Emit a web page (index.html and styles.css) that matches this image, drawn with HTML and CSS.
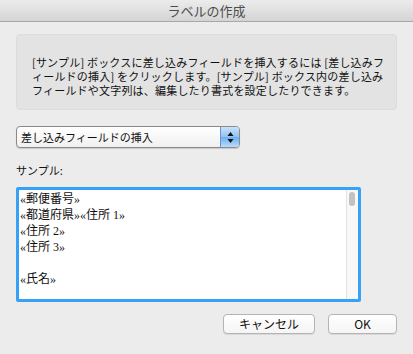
FILE: index.html
```html
<!DOCTYPE html>
<html lang="ja">
<head>
    <meta charset="UTF-8">
    <title>ラベルの作成</title>
    <link rel="stylesheet" href="styles.css">
</head>
<body>
    <div class="window">
        <div class="titlebar">ラベルの作成</div>

        <div class="content">
            <div class="info">
                <p>[サンプル] ボックスに差し込みフィールドを挿入するには [差し込みフ<br>ィールドの挿入] をクリックします。[サンプル] ボックス内の差し込み<br>フィールドや文字列は、編集したり書式を設定したりできます。</p>
            </div>

            <div class="popup">
                <span class="popup-label">差し込みフィールドの挿入</span>
                <span class="stepper">
                    <svg width="7" height="13" viewBox="0 0 7 13">
                        <path d="M3.5 1 L6.5 5 L0.5 5 Z" fill="#111"/>
                        <path d="M3.5 12 L6.5 8 L0.5 8 Z" fill="#111"/>
                    </svg>
                </span>
            </div>

            <div class="sample-label">サンプル:</div>

            <div class="sample-box">
                <div class="sample-text">
                    <div class="line">«郵便番号»</div>
                    <div class="line">«都道府県»«住所 1»</div>
                    <div class="line">«住所 2»</div>
                    <div class="line">«住所 3»</div>
                    <div class="line"></div>
                    <div class="line">«氏名»</div>
                </div>
                <div class="scrollbar">
                    <div class="thumb"></div>
                </div>
            </div>

            <div class="buttons">
                <button class="btn btn-cancel">キャンセル</button>
                <button class="btn btn-ok">OK</button>
            </div>
        </div>
    </div>
</body>
</html>
```

FILE: styles.css
```css
* {
    margin: 0;
    padding: 0;
    box-sizing: border-box;
}

body {
    width: 413px;
    height: 354px;
    overflow: hidden;
    background-color: #ececec;
    font-family: "Noto Sans CJK JP", "Liberation Sans", sans-serif;
    color: #111;
}

.window {
    height: 354px;
    background-color: #ececec;
}

.titlebar {
    height: 22px;
    line-height: 21px;
    text-align: center;
    font-size: 13px;
    color: #4d4d4d;
    background: linear-gradient(#ececec, #d4d4d4);
    border-bottom: 1px solid #a8a8a8;
}

.content {
    padding: 12px 16px 0 16px;
}

.info {
    height: 76px;
    background-color: #e3e3e3;
    border: 1px solid #dcdcdc;
    border-radius: 4px;
    padding: 20px 4px 0 15px;
}

.info p {
    font-size: 11px;
    line-height: 14px;
    letter-spacing: 0.2px;
    white-space: nowrap;
    color: #111;
}

.popup {
    display: flex;
    width: 224px;
    height: 22px;
    margin-top: 16px;
    border: 1px solid #8a8a8a;
    border-radius: 4px;
    background: linear-gradient(#ffffff, #f0f0f0);
    box-shadow: 0 1px 1px rgba(0, 0, 0, 0.15);
    overflow: hidden;
}

.popup-label {
    flex: 1;
    font-size: 11px;
    line-height: 20px;
    padding-left: 4px;
}

.stepper {
    width: 19px;
    display: flex;
    align-items: center;
    justify-content: center;
    background: linear-gradient(#c9e2fb, #8fc2f5 50%, #6aaef3 51%, #b8dcfd);
    border-left: 1px solid #6d94c6;
}

.sample-label {
    font-size: 11px;
    line-height: 14px;
    margin-top: 15px;
}

.sample-box {
    display: flex;
    width: 345px;
    height: 115px;
    margin-top: 10px;
    border: 3px solid #37a1f8;
    border-radius: 2px;
    background-color: #fff;
}

.sample-text {
    flex: 1;
    padding: 1px 0 0 1px;
    font-family: "Liberation Serif", "Noto Sans CJK JP", serif;
    font-size: 12px;
    color: #111;
}

.line {
    height: 16px;
    line-height: 16px;
}

.scrollbar {
    width: 12px;
    background-color: #f8f8f8;
    border-left: 1px solid #e2e2e2;
    padding: 2px 0 0 2px;
}

.thumb {
    width: 6px;
    height: 14px;
    border-radius: 3px;
    background-color: #c2c2c2;
}

.buttons {
    display: flex;
    justify-content: flex-end;
    gap: 13px;
    margin-top: 12px;
}

.btn {
    height: 20px;
    border: 1px solid #b4b4b4;
    border-radius: 4px;
    background: linear-gradient(#ffffff, #f5f5f5);
    box-shadow: 0 1px 0 rgba(0, 0, 0, 0.08);
    font-family: "Noto Sans CJK JP", "Liberation Sans", sans-serif;
    font-size: 12px;
    line-height: 18px;
    color: #111;
}

.btn-cancel {
    width: 92px;
}

.btn-ok {
    width: 69px;
}
```
